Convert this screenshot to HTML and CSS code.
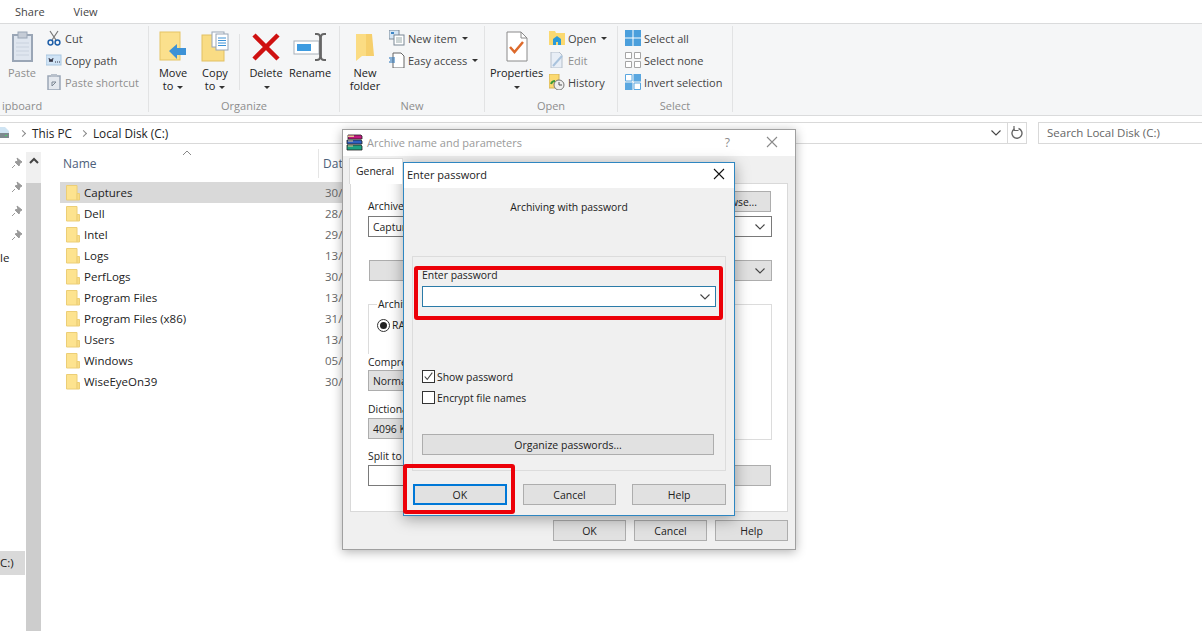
FILE: index.html
```html
<!DOCTYPE html>
<html lang="en">
<head>
    <meta charset="utf-8">
    <title>Local Disk (C:)</title>
    <link rel="stylesheet" href="styles.css">
</head>
<body>
    <svg class="defs" width="0" height="0">
        <symbol id="folder" viewBox="0 0 16 16">
            <path d="M1.500.500h10.500v14.500H1.500z" fill="#fde38f" stroke="#ecce76"/>
            <path d="M12 8.500h2.500v6.500H12z" fill="#f9dc84" stroke="#ecce76"/>
        </symbol>
        <symbol id="pin" viewBox="0 0 12 12">
            <path d="M6 1l5 4-2 1-1 3-4-4 3-1zM4 8l-3 3" fill="#9a9a9a" stroke="#9a9a9a"/>
        </symbol>
        <symbol id="chev" viewBox="0 0 12 8">
            <path d="M1.500 1.500L6 6l4.500-4.500" fill="none" stroke="#444" stroke-width="1.100"/>
        </symbol>
    </svg>

    <div class="tabs">
        <span>Share</span>
        <span>View</span>
    </div>

    <div class="ribbon">
        <section class="group group-clipboard">
            <div class="group-body">
                <div class="big dim">
                    <svg width="21" height="32" viewBox="0 0 21 32"><rect x="1" y="4" width="19" height="26" fill="#dfe6ef" stroke="#9aa6b6" stroke-width="2"/><rect x="6" y="1" width="9" height="6" fill="#c5ccd6" stroke="#9aa6b6"/><path d="M4 12h13M4 16h13M4 20h13M4 24h13" stroke="#c9d2de"/></svg>
                    <span>Paste</span>
                </div>
                <ul class="small-list">
                    <li><svg width="16" height="16" viewBox="0 0 16 16"><path d="M4 1l6 9M12 1l-6 9" stroke="#777" stroke-width="1.200"/><circle cx="4.500" cy="12.500" r="2.400" fill="none" stroke="#1f5fa8" stroke-width="1.500"/><circle cx="11.500" cy="12.500" r="2.400" fill="none" stroke="#1f5fa8" stroke-width="1.500"/></svg>Cut</li>
                    <li><svg width="16" height="16" viewBox="0 0 16 16"><rect x="0" y="3" width="15" height="10" fill="#cfe3f5" stroke="#a9c6e0"/><path d="M3 6l1 4 1-3 1 3 1-4M9 10h1M11 10h1M13 10h1" stroke="#334" fill="none"/></svg>Copy path</li>
                    <li class="dim"><svg width="16" height="16" viewBox="0 0 16 16"><rect x="2" y="2" width="12" height="14" fill="#e4e8ee" stroke="#9aa6b6" stroke-width="1.500"/><rect x="5" y="0" width="6" height="3" fill="#b8c0cb"/><path d="M6 12V8h4M10 8l-4 4" stroke="#7c8794" fill="none"/></svg>Paste shortcut</li>
                </ul>
            </div>
            <div class="group-name">ipboard</div>
        </section>

        <section class="group group-organize">
            <div class="group-body">
                <div class="big">
                    <svg width="28" height="32" viewBox="0 0 28 32"><rect x="1" y="1" width="20" height="28" fill="#fbe08d" stroke="#e5c467"/><path d="M10 20l8-7v4h9v7h-9v4z" fill="#3d92d6"/></svg>
                    <span>Move<br>to <i class="caret"></i></span>
                </div>
                <div class="big">
                    <svg width="28" height="32" viewBox="0 0 28 32"><rect x="1" y="4" width="22" height="26" fill="#f9dc84" stroke="#e2c063"/><rect x="11" y="1" width="12" height="15" fill="#fff" stroke="#9aa6b6"/><rect x="15" y="3" width="12" height="16" fill="#fff" stroke="#9aa6b6"/><path d="M17 7h8M17 9.500h8M17 12h8M17 14.500h8" stroke="#3d92d6"/></svg>
                    <span>Copy<br>to <i class="caret"></i></span>
                </div>
                <i class="divider"></i>
                <div class="big">
                    <svg width="28" height="32" viewBox="0 0 28 32"><path d="M2 4l24 24M26 4L2 28" stroke="#cf1111" stroke-width="4.500"/></svg>
                    <span>Delete<br><i class="caret"></i></span>
                </div>
                <div class="big big-rename">
                    <svg width="34" height="32" viewBox="0 0 34 32"><rect x="1" y="10" width="25" height="13" fill="#fff" stroke="#a8b0ba"/><rect x="4" y="13" width="14" height="7" fill="#3d9be0"/><path d="M22 3h2c2 0 3 1 3 3v20c0 2-1 3-3 3h-2M33 3h-2c-2 0-3 1-3 3v20c0 2 1 3 3 3h2" stroke="#666" stroke-width="1.800" fill="none"/></svg>
                    <span>Rename</span>
                </div>
            </div>
            <div class="group-name">Organize</div>
        </section>

        <section class="group group-new">
            <div class="group-body">
                <div class="big">
                    <svg width="20" height="32" viewBox="0 0 20 32"><path d="M1 3h16v22H7l-6 5z" fill="#fbdc83"/><path d="M11 3h6l2 22H11z" fill="#f6cf6c"/></svg>
                    <span>New<br>folder</span>
                </div>
                <ul class="small-list">
                    <li><svg width="16" height="16" viewBox="0 0 16 16"><rect x="0" y="0" width="10" height="9" fill="#d5e6f5" stroke="#7b8896"/><rect x="2" y="2" width="3" height="2" fill="#3d86c6"/><rect x="5" y="5" width="10" height="10" fill="#fff" stroke="#7b8896"/><path d="M7 8h6M7 10h6M7 12h6" stroke="#9aa"/></svg>New item <i class="caret"></i></li>
                    <li><svg width="16" height="16" viewBox="0 0 16 16"><path d="M4 1h8l3 3v12H4z" fill="#fff" stroke="#666"/><path d="M0 6h6M1 8h5M0 10h6" stroke="#1f6fb8"/></svg>Easy access <i class="caret"></i></li>
                </ul>
            </div>
            <div class="group-name">New</div>
        </section>

        <section class="group group-open">
            <div class="group-body">
                <div class="big wide">
                    <svg width="22" height="32" viewBox="0 0 22 32"><path d="M1 1h14l6 6v23H1z" fill="#fff" stroke="#8a8a8a"/><path d="M15 1v6h6" fill="none" stroke="#8a8a8a"/><path d="M4 16l4.500 5L17 11" fill="none" stroke="#dd6a2c" stroke-width="2.500"/></svg>
                    <span>Properties<br><i class="caret"></i></span>
                </div>
                <ul class="small-list">
                    <li><svg width="16" height="16" viewBox="0 0 16 16"><path d="M0 1h6l1 2h9v12H0z" fill="#fbd970"/><path d="M4 15V9l4-3 4 3v6z" fill="#2b9ad8"/><path d="M7 15v-3h2v3z" fill="#fbd970"/></svg>Open <i class="caret"></i></li>
                    <li class="dim"><svg width="16" height="16" viewBox="0 0 16 16"><path d="M2 0h8l3 3v13H2z" fill="#e8eef6" stroke="#b5bfcb"/><path d="M4 14l9-10" stroke="#a9c3dd" stroke-width="2"/></svg>Edit</li>
                    <li><svg width="16" height="16" viewBox="0 0 16 16"><rect x="0" y="0" width="10" height="14" fill="#fbd970" stroke="#d3b45c"/><circle cx="10" cy="11" r="5" fill="#eee" stroke="#777"/><path d="M10 8v3h3" stroke="#555" fill="none"/><path d="M2 10c1-3 3-3 4-3" stroke="#3a9a3a" stroke-width="2" fill="none"/></svg>History</li>
                </ul>
            </div>
            <div class="group-name">Open</div>
        </section>

        <section class="group group-select">
            <div class="group-body">
                <ul class="small-list">
                    <li><svg width="16" height="16" viewBox="0 0 16 16"><rect width="16" height="16" fill="#fff"/><path d="M0 0h7.500v7.500H0zM8.500 0H16v7.500H8.500zM0 8.500h7.500V16H0zM8.500 8.500H16V16H8.500z" fill="#4b9fdc"/></svg>Select all</li>
                    <li><svg width="16" height="16" viewBox="0 0 16 16"><path d="M.5.500h6v6h-6zM9.500.5h6v6h-6zM.5 9.500h6v6h-6zM9.500 9.500h6v6h-6z" fill="#fff" stroke="#a5a5a5"/></svg>Select none</li>
                    <li><svg width="16" height="16" viewBox="0 0 16 16"><path d="M0 8.500h7.500V16H0zM8.500 0H16v7.500H8.500z" fill="#5aa7e0"/><path d="M.5.500h6.500v6.500H.5zM9 9h6.500v6.500H9z" fill="#fff" stroke="#5aa7e0"/></svg>Invert selection</li>
                </ul>
            </div>
            <div class="group-name">Select</div>
        </section>
    </div>

    <div class="address-row">
        <div class="address">
            <svg class="drive" width="10" height="12" viewBox="0 0 10 12"><path d="M0 0h5l4 4v2H0z" fill="#cfe4f3"/><path d="M0 6h9v5H0z" fill="#7d8a8f"/><path d="M5 8.500h2" stroke="#48d26a"/></svg>
            <i class="crumb-arrow"></i>
            <span>This PC</span>
            <i class="crumb-arrow"></i>
            <span>Local Disk (C:)</span>
            <svg class="address-chev" width="12" height="8"><use href="#chev"/></svg>
            <span class="refresh">
                <svg width="14" height="14" viewBox="0 0 14 14"><path d="M8.500 2.500a5 5 0 1 1-4 .4" fill="none" stroke="#666" stroke-width="1.400"/><path d="M4 0v4.500h4.500" fill="none" stroke="#666" stroke-width="1.200"/></svg>
            </span>
        </div>
        <div class="search">Search Local Disk (C:)</div>
    </div>

    <div class="main">
        <aside class="nav">
            <div class="pins">
                <svg width="12" height="12"><use href="#pin"/></svg>
                <svg width="12" height="12"><use href="#pin"/></svg>
                <svg width="12" height="12"><use href="#pin"/></svg>
                <svg width="12" height="12"><use href="#pin"/></svg>
            </div>
            <div class="nav-label nav-file">le</div>
            <div class="nav-label nav-drive">C:)</div>
            <div class="scrollbar">
                <div class="scroll-up"><svg width="10" height="7" viewBox="0 0 10 7"><path d="M1 6l4-4 4 4" fill="none" stroke="#444" stroke-width="2"/></svg></div>
            </div>
        </aside>

        <div class="files">
            <div class="files-head">
                <span class="col-name">Name</span>
                <svg class="sort" width="10" height="6" viewBox="0 0 10 6"><path d="M1 5l4-4 4 4" fill="none" stroke="#888"/></svg>
                <span class="col-date">Dat</span>
            </div>
            <div class="file selected"><svg width="16" height="16"><use href="#folder"/></svg><span class="file-name">Captures</span><span class="file-date">30/</span></div>
            <div class="file"><svg width="16" height="16"><use href="#folder"/></svg><span class="file-name">Dell</span><span class="file-date">28/</span></div>
            <div class="file"><svg width="16" height="16"><use href="#folder"/></svg><span class="file-name">Intel</span><span class="file-date">29/</span></div>
            <div class="file"><svg width="16" height="16"><use href="#folder"/></svg><span class="file-name">Logs</span><span class="file-date">13/</span></div>
            <div class="file"><svg width="16" height="16"><use href="#folder"/></svg><span class="file-name">PerfLogs</span><span class="file-date">30/</span></div>
            <div class="file"><svg width="16" height="16"><use href="#folder"/></svg><span class="file-name">Program Files</span><span class="file-date">13/</span></div>
            <div class="file"><svg width="16" height="16"><use href="#folder"/></svg><span class="file-name">Program Files (x86)</span><span class="file-date">31/</span></div>
            <div class="file"><svg width="16" height="16"><use href="#folder"/></svg><span class="file-name">Users</span><span class="file-date">13/</span></div>
            <div class="file"><svg width="16" height="16"><use href="#folder"/></svg><span class="file-name">Windows</span><span class="file-date">05/</span></div>
            <div class="file"><svg width="16" height="16"><use href="#folder"/></svg><span class="file-name">WiseEyeOn39</span><span class="file-date">30/</span></div>
        </div>
    </div>

    <!-- WinRAR window behind -->
    <div class="archive-win">
        <div class="archive-title">
            <svg width="17" height="17" viewBox="0 0 17 17"><path d="M2 1h13l1 1v3H2z" fill="#c2187f" stroke="#222" stroke-width=".8"/><path d="M1 6h14l1 1v3H1z" fill="#2f5fc0" stroke="#222" stroke-width=".8"/><path d="M1 11h14l1 1v4H1z" fill="#1ea080" stroke="#222" stroke-width=".8"/><path d="M2 1.500h6v1.500H2zM2 6.500h5v1H2zM2 11.500h5v1H2z" fill="#e6c58e"/></svg>
            <span class="archive-title-text">Archive name and parameters</span>
            <span class="archive-help">?</span>
            <svg width="12" height="12" viewBox="0 0 12 12"><path d="M1 1l10 10M11 1L1 11" stroke="#8a8a8a" stroke-width="1.100"/></svg>
        </div>
        <div class="archive-body">
            <div class="archive-tab">General</div>
            <div class="archive-panel">
                <div class="archive-label arch-name">Archive</div>
                <div class="field browse">Browse...</div>
                <div class="field capt">Captures.rar<svg width="12" height="8"><use href="#chev"/></svg></div>
                <div class="field grey-field profile"><svg width="12" height="8"><use href="#chev"/></svg></div>
                <div class="format-box">
                    <span class="format-legend">Archive</span>
                    <span class="radio"><i></i></span><span class="radio-text">RAR</span>
                </div>
                <div class="options-box"></div>
                <div class="archive-label arch-comp">Compression</div>
                <div class="field grey-field comp">Normal</div>
                <div class="archive-label arch-dict">Dictionary</div>
                <div class="field grey-field dict">4096 KB</div>
                <div class="archive-label arch-split">Split to</div>
                <div class="field split"></div>
                <div class="field grey-field split-right"></div>
            </div>
            <div class="archive-buttons">
                <button class="btn">OK</button>
                <button class="btn">Cancel</button>
                <button class="btn">Help</button>
            </div>
        </div>
    </div>

    <!-- password dialog -->
    <div class="pass-win">
        <div class="pass-title">
            <span>Enter password</span>
            <svg width="12" height="12" viewBox="0 0 12 12"><path d="M1 1l10 10M11 1L1 11" stroke="#111" stroke-width="1.100"/></svg>
        </div>
        <div class="pass-body">
            <div class="pass-heading">Archiving with password</div>
            <div class="pass-box">
                <label class="pass-label">Enter password</label>
                <div class="pass-input"><svg width="12" height="8"><use href="#chev"/></svg></div>
                <div class="check-row first">
                    <span class="check"><svg width="11" height="11" viewBox="0 0 13 13"><path d="M2 6.500l3 3.500 6-8" fill="none" stroke="#444" stroke-width="1.300"/></svg></span>
                    Show password
                </div>
                <div class="check-row"><span class="check"></span>Encrypt file names</div>
                <button class="btn organize">Organize passwords...</button>
            </div>
            <div class="pass-buttons">
                <button class="btn default">OK</button>
                <button class="btn">Cancel</button>
                <button class="btn">Help</button>
            </div>
        </div>
    </div>

    <div class="mark mark-input"></div>
    <div class="mark mark-ok"></div>
</body>
</html>
```

FILE: styles.css
```css
* {
    margin: 0;
    padding: 0;
    box-sizing: border-box;
}

html, body {
    width: 1202px;
    height: 631px;
    overflow: hidden;
}

body {
    position: relative;
    background: white;
    font-family: "Open Sans", "Noto Sans", sans-serif;
    font-size: 11px;
    color: #222;
}

.defs {
    position: absolute;
}

i {
    font-style: normal;
}

/* ribbon */
.tabs {
    height: 24px;
    display: flex;
    gap: 29px;
    padding: 4px 0 0 15px;
    color: #444;
    border-bottom: 1px solid #dadbdc;
}

.ribbon {
    height: 92px;
    display: flex;
    background: #f5f6f7;
    border-bottom: 1px solid #dadbdc;
    padding-top: 2px;
}

.group {
    display: flex;
    flex-direction: column;
    border-right: 1px solid #e2e3e4;
    margin-bottom: 3px;
}

.group-body {
    flex: 1;
    display: flex;
    align-items: flex-start;
    padding-top: 1px;
}

.group-name {
    text-align: center;
    color: #8d8d8d;
    height: 14px;
}

.group-clipboard { width: 149px; }
.group-clipboard .group-name { text-align: left; padding-left: 2px; }
.group-organize { width: 191px; }
.group-new { width: 145px; }
.group-open { width: 133px; }
.group-select { width: 115px; }

.group-clipboard .group-body { padding-left: 1px; }
.group-organize .group-body { padding-left: 3px; }
.group-new .group-body { padding-left: 4px; }
.group-open .group-body { padding-left: 2px; }
.group-select .group-body { padding-left: 4px; }

.big {
    display: flex;
    flex-direction: column;
    align-items: center;
    text-align: center;
    line-height: 13px;
    min-width: 42px;
    gap: 3px;
    padding-top: 4px;
}

.big.wide {
    width: 59px;
}

.big-rename {
    margin-left: 2px;
}

.dim {
    color: #8f8f8f;
}

.caret {
    display: inline-block;
    border: 3px solid transparent;
    border-top: 3px solid #333;
    border-bottom: 0;
    vertical-align: middle;
    margin-left: 1px;
}

.divider {
    width: 1px;
    height: 56px;
    background: #e2e3e4;
    margin: 7px 5px 0 3px;
}

.small-list {
    list-style: none;
    margin-left: 3px;
}

.small-list li {
    height: 22px;
    display: flex;
    align-items: center;
    gap: 3px;
    white-space: nowrap;
    color: #444;
}

.small-list li.dim {
    color: #8f8f8f;
}

.small-list .caret {
    margin-left: 2px;
}

/* address bar */
.address-row {
    display: flex;
    justify-content: space-between;
    height: 22px;
    margin-top: 6px;
}

.address {
    width: 1027px;
    display: flex;
    align-items: center;
    border-top: 1px solid #d9d9d9;
    border-bottom: 1px solid #d9d9d9;
    color: #222;
    font-size: 11.8px;
}

.drive {
    margin-right: 7px;
}

.crumb-arrow {
    width: 5px;
    height: 5px;
    border-top: 1px solid #888;
    border-right: 1px solid #888;
    transform: rotate(45deg);
    margin: 0 7px 0 3px;
}

.crumb-arrow + span + .crumb-arrow {
    margin-left: 9px;
}

.address-chev {
    margin-left: auto;
    margin-right: 5px;
}

.refresh {
    width: 20px;
    height: 20px;
    display: flex;
    align-items: center;
    justify-content: center;
    border-left: 1px solid #d9d9d9;
    border-right: 1px solid #d9d9d9;
}

.search {
    width: 164px;
    border: 1px solid #d9d9d9;
    border-right: 0;
    padding: 2px 0 0 8px;
    color: #666;
    font-size: 11.5px;
}

/* explorer */
.main {
    display: flex;
    height: 487px;
}

.nav {
    width: 60px;
    position: relative;
}

.pins {
    position: absolute;
    top: 13px;
    left: 11px;
    display: flex;
    flex-direction: column;
    gap: 12px;
}

.nav-label {
    position: absolute;
    left: 0;
    font-size: 11.5px;
}

.nav-file { top: 106px; }

.nav-drive {
    top: 407px;
    width: 25px;
    height: 24px;
    padding-top: 4px;
    background: #d9d9d9;
}

.scrollbar {
    position: absolute;
    left: 26px;
    top: 8px;
    width: 15px;
    height: 479px;
    background: #cdcdcd;
}

.scroll-up {
    height: 31px;
    background: #f0f0f0;
    display: flex;
    justify-content: center;
    padding-top: 5px;
}

.files {
    flex: 1;
    padding-top: 2px;
}

.files-head {
    height: 36px;
    display: flex;
    align-items: center;
    position: relative;
    padding: 0 0 2px 3px;
    color: #4c607a;
    font-size: 12px;
}

.col-name {
    width: 255px;
}

.col-date {
    border-left: 1px solid #e5e5e5;
    padding: 6px 0 6px 4px;
}

.sort {
    position: absolute;
    left: 122px;
    top: 4px;
}

.file {
    height: 21px;
    display: flex;
    align-items: center;
    padding-left: 5px;
    width: 290px;
    font-size: 11.5px;
}

.file.selected {
    background: #d9d9d9;
}

.file-name {
    width: 242px;
    margin-left: 2px;
    padding-left: 1px;
}

.file-date {
    color: #666;
}

.file svg {
    flex-shrink: 0;
}

/* buttons */
.btn {
    height: 21px;
    background: #e1e1e1;
    border: 1px solid #adadad;
    font-family: inherit;
    font-size: 10.5px;
    color: #222;
}

/* WinRAR window */
.archive-win {
    position: absolute;
    left: 342px;
    top: 129px;
    width: 454px;
    height: 421px;
    background: #f0f0f0;
    border: 1px solid #a0a0a0;
    box-shadow: 0 2px 10px rgba(0, 0, 0, 0.3);
    font-size: 10.4px;
}

.archive-title {
    height: 26px;
    background: white;
    display: flex;
    align-items: center;
    padding: 0 17px 2px 3px;
    font-size: 11px;
}

.archive-title-text {
    flex: 1;
    margin-left: 4px;
    color: #9a9a9a;
}

.archive-help {
    color: #8a8a8a;
    margin-right: 36px;
    font-size: 12px;
}

.archive-body {
    padding: 0 7px;
    position: relative;
}

.archive-tab {
    position: absolute;
    left: 6px;
    top: 2px;
    width: 54px;
    height: 26px;
    background: white;
    border: 1px solid #d9d9d9;
    border-bottom: 0;
    padding: 5px 0 0 6px;
    z-index: 1;
}

.archive-panel {
    position: relative;
    top: 27px;
    height: 329px;
    background: white;
    border: 1px solid #d9d9d9;
}

.archive-label {
    position: absolute;
    left: 17px;
}

.arch-name { top: 15px; }
.arch-comp { top: 171px; }
.arch-dict { top: 218px; }
.arch-split { top: 265px; }

.field {
    position: absolute;
    height: 21px;
    border: 1px solid #7a7a7a;
    background: white;
    display: flex;
    align-items: center;
    justify-content: space-between;
    padding: 0 5px 0 4px;
}

.browse {
    left: 330px;
    top: 7px;
    width: 90px;
    background: #e1e1e1;
    border-color: #adadad;
    justify-content: flex-end;
    padding-right: 13px;
}

.capt { left: 17px; top: 32px; width: 404px; }

.grey-field {
    background: #e1e1e1;
    border-color: #adadad;
}

.profile {
    left: 18px;
    top: 76px;
    width: 403px;
    justify-content: flex-end;
}

.comp { left: 17px; top: 186px; width: 60px; }
.dict { left: 17px; top: 234px; width: 60px; }
.split { left: 17px; top: 281px; width: 60px; }
.split-right { left: 340px; top: 281px; width: 80px; }

.format-box {
    position: absolute;
    left: 17px;
    top: 120px;
    width: 60px;
    height: 50px;
    border: 1px solid #dcdcdc;
    border-right: 0;
    border-bottom: 0;
}

.format-legend {
    position: absolute;
    left: 8px;
    top: -8px;
    background: white;
    padding: 0 1px;
}

.radio {
    position: absolute;
    left: 8px;
    top: 14px;
    width: 13px;
    height: 13px;
    border: 1px solid #333;
    border-radius: 50%;
    display: flex;
    align-items: center;
    justify-content: center;
}

.radio i {
    width: 7px;
    height: 7px;
    border-radius: 50%;
    background: #222;
}

.radio-text {
    position: absolute;
    left: 23px;
    top: 13px;
}

.options-box {
    position: absolute;
    left: 340px;
    top: 120px;
    width: 81px;
    height: 136px;
    border: 1px solid #dcdcdc;
    border-left: 0;
}

.archive-buttons {
    display: flex;
    justify-content: flex-end;
    gap: 8px;
    margin-top: 35px;
}

.archive-buttons .btn {
    width: 73px;
}

/* password dialog */
.pass-win {
    position: absolute;
    left: 403px;
    top: 162px;
    width: 332px;
    height: 354px;
    background: #f0f0f0;
    border: 1px solid #2e86c1;
    box-shadow: 0 3px 14px rgba(0, 0, 0, 0.35);
    font-size: 10.4px;
}

.pass-title {
    height: 25px;
    background: white;
    display: flex;
    align-items: center;
    justify-content: space-between;
    padding: 0 9px 3px 3px;
    font-size: 11px;
}

.pass-body {
    padding: 0 8px;
}

.pass-heading {
    text-align: center;
    padding-top: 12px;
    height: 68px;
}

.pass-box {
    height: 215px;
    border: 1px solid #dcdcdc;
    padding: 11px 9px 0 9px;
}

.pass-label {
    display: block;
    line-height: 14px;
}

.pass-input {
    height: 21px;
    margin-top: 4px;
    background: white;
    border: 1px solid #2b7ba8;
    display: flex;
    align-items: center;
    justify-content: flex-end;
    padding-right: 4px;
}

.check-row {
    display: flex;
    align-items: center;
    gap: 2px;
    height: 21px;
}

.check-row.first {
    margin-top: 59px;
}

.check {
    width: 13px;
    height: 13px;
    background: white;
    border: 1px solid #333;
    display: flex;
}

.btn.organize {
    display: block;
    width: 292px;
    margin-top: 26px;
}

.pass-buttons {
    display: flex;
    gap: 16px;
    margin-top: 13px;
    padding-left: 1px;
}

.pass-buttons .btn {
    width: 94px;
}

.btn.default {
    border: 2px solid #0078d7;
}

/* red highlight boxes */
.mark {
    position: absolute;
    border: 4px solid #ec0008;
    border-radius: 3px;
}

.mark-input {
    left: 414px;
    top: 266px;
    width: 309px;
    height: 54px;
}

.mark-ok {
    left: 403px;
    top: 464px;
    width: 112px;
    height: 50px;
}
```
